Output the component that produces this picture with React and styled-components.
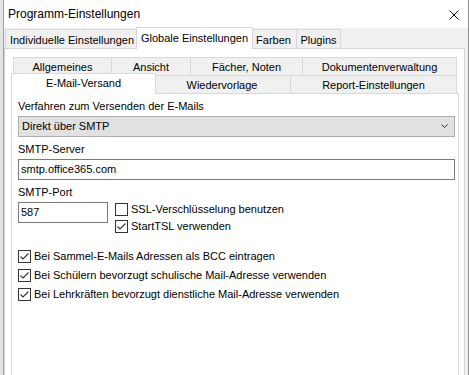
import React from 'react';
import styled, { createGlobalStyle } from 'styled-components';

const Global = createGlobalStyle`
  html, body { margin: 0; padding: 0; background: #e4e4e4; }
  body {
    width: 469px; height: 375px; overflow: hidden;
    font-family: "Liberation Sans", Arial, sans-serif;
    font-size: 11px; color: #000;
  }
  #root { height: 375px; }
`;

const Window = styled.div`
  margin-left: 3px;
  width: 464px;
  height: 375px;
  border-left: 1px solid #a0a0a0;
  border-right: 1px solid #8c8c8c;
  background: #f0f0f0;
  display: flex;
  flex-direction: column;
  overflow: hidden;
`;

const TitleBar = styled.div`
  height: 28px;
  flex: none;
  background: #fff;
  display: flex;
  justify-content: space-between;
  align-items: flex-start;
  padding: 0 9px 0 4px;
  box-sizing: border-box;
`;

const Title = styled.div`
  font-size: 12px;
  line-height: 16px;
  padding-top: 6px;
`;

const CloseIcon = styled.svg`
  width: 10px;
  height: 10px;
  margin-top: 10px;
`;

const Body = styled.div`
  flex: 1;
  display: flex;
  flex-direction: column;
  padding-right: 3px;
  min-height: 0;
`;

const TabStrip = styled.div`
  display: flex;
  align-items: flex-end;
  height: ${p => p.$h}px;
  padding-left: ${p => p.$pad}px;
  margin-top: ${p => p.$mt || 0}px;
  flex: none;
  position: relative;
  z-index: 1;
`;

const Tab = styled.div`
  position: relative;
  box-sizing: border-box;
  flex: none;
  width: ${p => p.$w + (p.$active ? 4 : 0)}px;
  height: ${p => p.$h + (p.$active ? p.$lift + 1 : 0)}px;
  margin-left: ${p => (p.$first ? 0 : -1) - (p.$active ? 2 : 0)}px;
  margin-right: ${p => (p.$active ? -2 : 0)}px;
  margin-bottom: ${p => (p.$active ? -1 : 0)}px;
  z-index: ${p => (p.$active ? 2 : 1)};
  border: 1px solid #d9d9d9;
  border-bottom: none;
  background: ${p => (p.$active ? '#fff' : '#f0f0f0')};
  text-align: center;
  padding-top: 1px;
  line-height: ${p => p.$h - 1}px;
  white-space: nowrap;
`;

const OuterPanel = styled.div`
  flex: 1;
  background: #fff;
  border: 1px solid #d4d4d4;
  border-bottom: none;
  padding: 8px 5px 0 6px;
  display: flex;
  flex-direction: column;
  min-height: 0;
`;

const InnerTabs = styled.div`
  display: flex;
  flex-direction: column;
  flex: none;
`;

const InnerPanel = styled.div`
  flex: 1;
  background: #fff;
  border: 1px solid #d9d9d9;
  border-bottom: none;
  padding: 5px 3px 0 6px;
  display: flex;
  flex-direction: column;
`;

const Label = styled.div`
  line-height: 15px;
  height: 15px;
  margin-top: ${p => p.$mt || 0}px;
  margin-bottom: ${p => p.$mb || 0}px;
`;

const Select = styled.div`
  box-sizing: border-box;
  height: 21px;
  border: 1px solid #adadad;
  background: #e1e1e1;
  display: flex;
  align-items: center;
  justify-content: space-between;
  padding: 0 6px 0 3px;
  line-height: 15px;
`;

const Chevron = styled.svg`
  width: 7px;
  height: 5px;
`;

const Input = styled.div`
  box-sizing: border-box;
  height: 21px;
  width: ${p => (p.$w ? `${p.$w}px` : 'auto')};
  flex: none;
  border: 1px solid #7a7a7a;
  background: #fff;
  padding: 0 2px;
  line-height: 19px;
`;

const PortRow = styled.div`
  display: flex;
  align-items: flex-start;
  gap: 7px;
`;

const CheckList = styled.div`
  display: flex;
  flex-direction: column;
  gap: ${p => p.$gap}px;
  margin-top: ${p => p.$mt || 0}px;
`;

const CheckRow = styled.div`
  display: flex;
  align-items: center;
  height: 15px;
  line-height: 15px;
  white-space: nowrap;
`;

const Box = styled.span`
  box-sizing: border-box;
  width: 13px;
  height: 13px;
  flex: none;
  border: 1px solid #333;
  background: #fff;
  display: flex;
  margin-right: 3px;
`;

const CheckSvg = styled.svg`
  width: 11px;
  height: 11px;
`;

function Check({ checked, children }) {
  return (
    <CheckRow>
      <Box>
        {checked && (
          <CheckSvg viewBox="0 0 11 11">
            <polyline points="1.5,5.5 4,8 9.5,2.5" fill="none" stroke="#333" strokeWidth="1.1" />
          </CheckSvg>
        )}
      </Box>
      <span>{children}</span>
    </CheckRow>
  );
}

const outerTabs = [
  { t: 'Individuelle Einstellungen', w: 134 },
  { t: 'Globale Einstellungen', w: 113, a: true },
  { t: 'Farben', w: 47 },
  { t: 'Plugins', w: 45 },
];

const row1 = [
  { t: 'Allgemeines', w: 99 },
  { t: 'Ansicht', w: 80 },
  { t: 'Fächer, Noten', w: 113 },
  { t: 'Dokumentenverwaltung', w: 155 },
];

const row2 = [
  { t: 'E-Mail-Versand', w: 141, a: true },
  { t: 'Wiedervorlage', w: 138 },
  { t: 'Report-Einstellungen', w: 167 },
];

export default function App() {
  return (
    <>
      <Global />
      <Window>
        <TitleBar>
          <Title>Programm-Einstellungen</Title>
          <CloseIcon viewBox="0 0 10 10">
            <path d="M0.5 0.5 L9.5 9.5 M9.5 0.5 L0.5 9.5" stroke="#111" strokeWidth="1" fill="none" />
          </CloseIcon>
        </TitleBar>
        <Body>
          <TabStrip $h={21} $pad={1} $mt={-1}>
            {outerTabs.map((o, i) => (
              <Tab key={o.t} $w={o.w} $h={19} $lift={2} $first={i === 0} $active={o.a}>{o.t}</Tab>
            ))}
          </TabStrip>
          <OuterPanel>
            <InnerTabs>
              <TabStrip $h={18} $pad={2}>
                {row1.map((o, i) => (
                  <Tab key={o.t} $w={o.w} $h={18} $lift={2} $first={i === 0}>{o.t}</Tab>
                ))}
              </TabStrip>
              <TabStrip $h={18} $pad={2}>
                {row2.map((o, i) => (
                  <Tab key={o.t} $w={o.w} $h={18} $lift={2} $first={i === 0} $active={o.a}>{o.t}</Tab>
                ))}
              </TabStrip>
            </InnerTabs>
            <InnerPanel>
              <Label $mb={2}>Verfahren zum Versenden der E-Mails</Label>
              <Select>
                <span>Direkt über SMTP</span>
                <Chevron viewBox="0 0 7 5">
                  <polyline points="0.5,0.5 3.5,3.5 6.5,0.5" fill="none" stroke="#333" strokeWidth="1" />
                </Chevron>
              </Select>
              <Label $mt={5} $mb={2}>SMTP-Server</Label>
              <Input>smtp.office365.com</Input>
              <Label $mt={5} $mb={2}>SMTP-Port</Label>
              <PortRow>
                <Input $w={90}>587</Input>
                <CheckList $gap={2}>
                  <Check>SSL-Verschlüsselung benutzen</Check>
                  <Check checked>StartTSL verwenden</Check>
                </CheckList>
              </PortRow>
              <CheckList $gap={4} $mt={15}>
                <Check checked>Bei Sammel-E-Mails Adressen als BCC eintragen</Check>
                <Check checked>Bei Schülern bevorzugt schulische Mail-Adresse verwenden</Check>
                <Check checked>Bei Lehrkräften bevorzugt dienstliche Mail-Adresse verwenden</Check>
              </CheckList>
            </InnerPanel>
          </OuterPanel>
        </Body>
      </Window>
    </>
  );
}
